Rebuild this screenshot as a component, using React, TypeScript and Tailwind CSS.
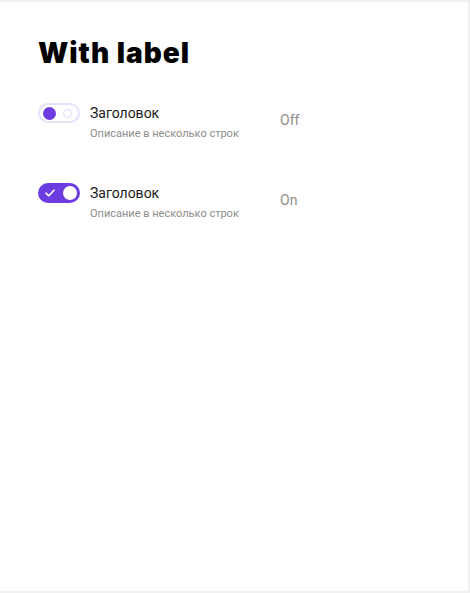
import { useState } from "react";

function Toggle({ on, onClick }: { on: boolean; onClick: () => void }) {
  if (on) {
    return (
      <button
        onClick={onClick}
        className="flex h-[20px] w-[42px] shrink-0 items-center justify-between rounded-full bg-[#6c3ce0] pl-[7px] pr-[3px]"
      >
        <svg width="10" height="8" viewBox="0 0 10 8" fill="none">
          <path d="M1 4.2 L3.8 6.8 L9 1.2" stroke="white" strokeWidth="1.6" strokeLinecap="round" strokeLinejoin="round" />
        </svg>
        <span className="h-[14px] w-[14px] rounded-full bg-white" />
      </button>
    );
  }
  return (
    <button
      onClick={onClick}
      className="flex h-[20px] w-[42px] shrink-0 items-center justify-between rounded-full border-2 border-[#e8e0fc] bg-white pl-[3px] pr-[6px]"
    >
      <span className="h-[13px] w-[13px] rounded-full bg-[#6c3ce0]" />
      <span className="h-[9px] w-[9px] rounded-full border border-[#e2d9fb]" />
    </button>
  );
}

export default function App() {
  const [rows, setRows] = useState([false, true]);

  return (
    <div className="min-h-screen bg-[#f0f0f0] pt-[2px]">
      <div className="h-[589px] w-[468px] bg-white px-[38px] pt-[33px] font-['Roboto',sans-serif]">
        {/* Heading */}
        <h1 className="font-['Inter',sans-serif] text-[28px] font-black leading-[36px] tracking-[1px] text-black">
          With label
        </h1>

        <div className="mt-[32px] flex flex-col gap-[42px]">
          {rows.map((on, i) => (
            <div key={i} className="flex items-start">
              <Toggle on={on} onClick={() => setRows(rows.map((r, j) => (j === i ? !r : r)))} />
              <div className="ml-[10px] w-[190px]">
                <p className="text-[14px] leading-[20px] text-[#1a1a1a]">Заголовок</p>
                <p className="mt-[4px] text-[11px] leading-[14px] text-[#8d8d8d]">Описание в несколько строк</p>
              </div>
              <span className="mt-[7px] text-[14px] leading-[20px] text-[#8d8d8d]">{on ? "On" : "Off"}</span>
            </div>
          ))}
        </div>
      </div>
    </div>
  );
}
